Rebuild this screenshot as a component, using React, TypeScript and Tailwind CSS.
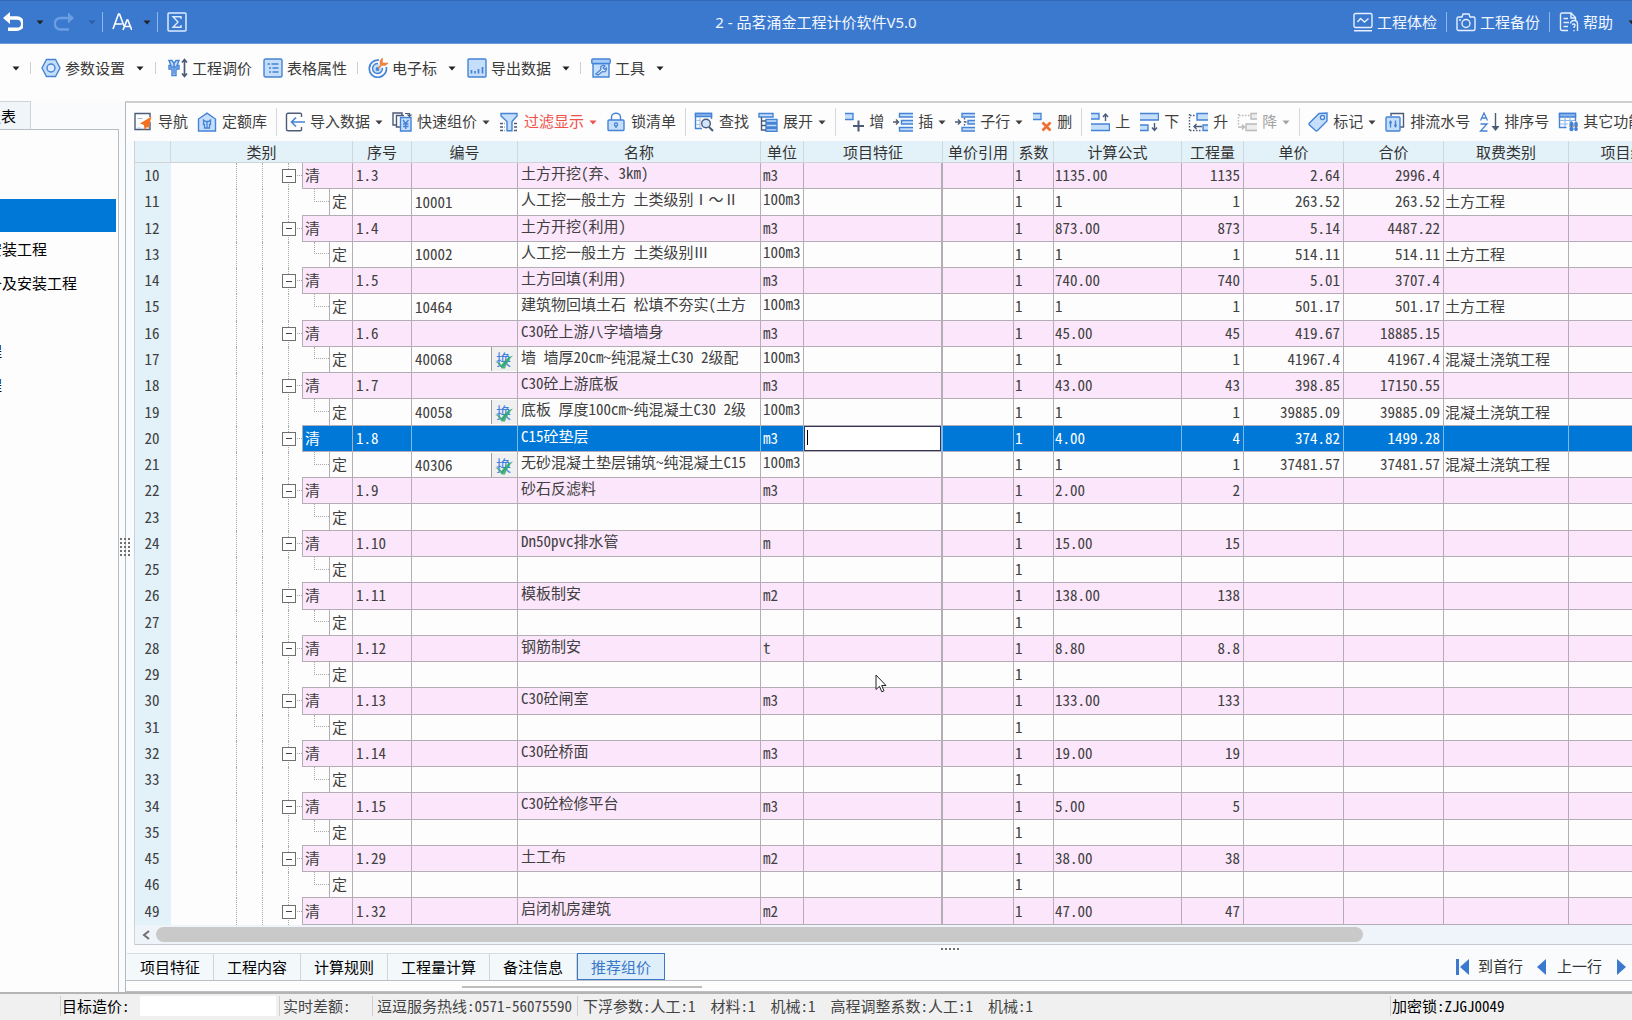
import type { ReactNode } from "react";

// --- DATA ---

type Row = {
    no: number;
    seq?: string;
    code?: string;
    name?: string;
    unit?: string;
    formula?: string;
    qty?: string;
    price?: string;
    total?: string;
    fee?: string;
};

const rows: Row[] = [
    { no: 10, seq: "1.3", name: "土方开挖(弃、3km)", unit: "m3", formula: "1135.00", qty: "1135", price: "2.64", total: "2996.4" },
    { no: 11, code: "10001", name: "人工挖一般土方 土类级别Ⅰ～Ⅱ", unit: "100m3", formula: "1", qty: "1", price: "263.52", total: "263.52", fee: "土方工程" },
    { no: 12, seq: "1.4", name: "土方开挖(利用)", unit: "m3", formula: "873.00", qty: "873", price: "5.14", total: "4487.22" },
    { no: 13, code: "10002", name: "人工挖一般土方 土类级别Ⅲ", unit: "100m3", formula: "1", qty: "1", price: "514.11", total: "514.11", fee: "土方工程" },
    { no: 14, seq: "1.5", name: "土方回填(利用)", unit: "m3", formula: "740.00", qty: "740", price: "5.01", total: "3707.4" },
    { no: 15, code: "10464", name: "建筑物回填土石 松填不夯实(土方", unit: "100m3", formula: "1", qty: "1", price: "501.17", total: "501.17", fee: "土方工程" },
    { no: 16, seq: "1.6", name: "C30砼上游八字墙墙身", unit: "m3", formula: "45.00", qty: "45", price: "419.67", total: "18885.15" },
    { no: 17, code: "40068", name: "墙 墙厚20cm~纯混凝土C30 2级配", unit: "100m3", formula: "1", qty: "1", price: "41967.4", total: "41967.4", fee: "混凝土浇筑工程" },
    { no: 18, seq: "1.7", name: "C30砼上游底板", unit: "m3", formula: "43.00", qty: "43", price: "398.85", total: "17150.55" },
    { no: 19, code: "40058", name: "底板 厚度100cm~纯混凝土C30 2级", unit: "100m3", formula: "1", qty: "1", price: "39885.09", total: "39885.09", fee: "混凝土浇筑工程" },
    { no: 20, seq: "1.8", name: "C15砼垫层", unit: "m3", formula: "4.00", qty: "4", price: "374.82", total: "1499.28" },
    { no: 21, code: "40306", name: "无砂混凝土垫层铺筑~纯混凝土C15", unit: "100m3", formula: "1", qty: "1", price: "37481.57", total: "37481.57", fee: "混凝土浇筑工程" },
    { no: 22, seq: "1.9", name: "砂石反滤料", unit: "m3", formula: "2.00", qty: "2" },
    { no: 23 },
    { no: 24, seq: "1.10", name: "Dn50pvc排水管", unit: "m", formula: "15.00", qty: "15" },
    { no: 25 },
    { no: 26, seq: "1.11", name: "模板制安", unit: "m2", formula: "138.00", qty: "138" },
    { no: 27 },
    { no: 28, seq: "1.12", name: "钢筋制安", unit: "t", formula: "8.80", qty: "8.8" },
    { no: 29 },
    { no: 30, seq: "1.13", name: "C30砼闸室", unit: "m3", formula: "133.00", qty: "133" },
    { no: 31 },
    { no: 32, seq: "1.14", name: "C30砼桥面", unit: "m3", formula: "19.00", qty: "19" },
    { no: 33 },
    { no: 34, seq: "1.15", name: "C30砼检修平台", unit: "m3", formula: "5.00", qty: "5" },
    { no: 35 },
    { no: 45, seq: "1.29", name: "土工布", unit: "m2", formula: "38.00", qty: "38" },
    { no: 46 },
    { no: 49, seq: "1.32", name: "启闭机房建筑", unit: "m2", formula: "47.00", qty: "47" },
];

const SELECTED = 20;

// --- ICONS ---

const B = "#4583d6";
const F = "#c5defa";
const D = "#4c5b78";

const Svg = ({ children, stroke = B, className = "" }: { children: ReactNode; stroke?: string; className?: string }) => (
    <svg viewBox="0 0 20 20" className={`h-5 w-5 shrink-0 ${className}`} fill="none" stroke={stroke} strokeWidth="1.4" aria-hidden="true">
        {children}
    </svg>
);

const UndoIcon = () => (
    <Svg stroke="#fff" className="mr-1">
        <path d="M4 6h10a5 5 0 0 1 0 11.300H5" strokeWidth="3.400" />
        <path d="M0 6l7-6v12z" fill="#fff" stroke="none" />
    </Svg>
);
const RedoIcon = () => (
    <Svg stroke="#6b9fe2">
        <path d="M15 6H6.500a5 5 0 0 0 0 11.500H15" strokeWidth="2.400" />
        <path d="M20 6l-6-5.500v11z" fill="#6b9fe2" stroke="none" />
    </Svg>
);
const FontIcon = () => (
    <Svg stroke="#fff">
        <path d="M1 17L6.500 2h1L12 14M3 12h7" strokeWidth="1.600" />
        <path d="M11 18l4-10h.8l4 10M12.500 14.500h6" strokeWidth="1.600" />
    </Svg>
);
const SigmaIcon = () => (
    <Svg stroke="#dcebff">
        <rect x="1" y="1" width="18" height="18" rx="1" strokeWidth="1.500" />
        <path d="M14 7V4.700H6l5 5.300-5 5.300h8V13" />
    </Svg>
);
const CheckupIcon = () => (
    <Svg stroke="#e6f0ff">
        <rect x="1" y="1.500" width="18" height="14" rx="1.500" />
        <path d="M4.500 10l3-3.500 4 3.500 4-3.500M1 18.800h18" />
    </Svg>
);
const BackupIcon = () => (
    <Svg stroke="#e6f0ff">
        <path d="M6 5l1-3h6l1 3h3.500a1.500 1.500 0 0 1 1.500 1.500V17a1.500 1.500 0 0 1-1.500 1.500h-15A1.500 1.500 0 0 1 1 17V6.500A1.500 1.500 0 0 1 2.500 5z" />
        <circle cx="10" cy="11.500" r="4" />
        <path d="M3 8h2" />
    </Svg>
);
const HelpIcon = () => (
    <Svg stroke="#e6f0ff">
        <path d="M9 18.500H3A1.500 1.500 0 0 1 1.500 17V2.500A1.500 1.500 0 0 1 3 1h9l4.500 4.500v3M12 1v5h4.500M4.500 6.500H9M4.500 10.500H10M4.500 14.500H9" />
        <path d="M11.500 11.500c0-4 7-4 7 .5V19M13 12.500c3-1.500 4 1 2 2.500v1M15 18v1.200" />
    </Svg>
);
const HexIcon = () => (
    <Svg>
        <path d="M5.500 1.500h9L19 10l-4.500 8.500h-9L1 10z" fill={F} />
        <circle cx="10" cy="10" r="4" fill="#dcebfd" />
    </Svg>
);
const AdjustIcon = () => (
    <Svg>
        <path d="M1 2.500h3l2 3 2-3h3L9 7.500h2v3.500H8v6.500H4V11H1V7.500h2z" fill={F} />
        <path d="M6 6v10M2 9h8" />
        <path d="M16.500 2v16M14 4.500l2.500-3 2.500 3M14 15.500l2.500 3 2.500-3" stroke={D} strokeWidth="1.700" />
    </Svg>
);
const PropsIcon = () => (
    <Svg>
        <rect x="1" y="1" width="18" height="18" rx="1.500" fill={F} />
        <path d="M4.500 6H7M8.500 6h7M6 10h2M9.500 10h6M6 14h2M9.500 14h6" strokeWidth="1.300" />
    </Svg>
);
const TargetIcon = () => (
    <Svg>
        <path d="M18.300 9A8.600 8.600 0 1 1 11 2.200" strokeWidth="1.700" />
        <path d="M14.500 10a5 5 0 1 1-4.500-4.500" fill={F} />
        <circle cx="9.500" cy="11" r="1.200" fill={B} />
        <path d="M10 10.500L15 5M14 1v4.500h5L17 7h-3.500l-1-1V3z" stroke="#ee8240" strokeWidth="1.500" />
    </Svg>
);
const ExportIcon = () => (
    <Svg>
        <rect x="1" y="1" width="18" height="18" rx="1" fill={F} />
        <path d="M4.500 15.500V12M8 15.500V13M11.500 15.500V11M15.500 15.500V9" strokeWidth="1.700" />
    </Svg>
);
const ToolIcon = () => (
    <Svg>
        <path d="M2 5.500h16V19H2z" fill={F} />
        <rect x="0.800" y="1" width="18.400" height="4.500" rx="1" fill="#a7cdf8" />
        <path d="M5 16l5-4.500c-1.500-3 2-5 4-3.500l-2 2 1.500 1.500 2-1.500c.5 3-2 4.500-4 3.500L7 17z" fill="#e6f1fe" strokeWidth="1.200" />
    </Svg>
);
const NavIcon = () => (
    <Svg stroke={D}>
        <path d="M17 10v7.500H2V1.500h15V5" />
        <path d="M18.500 4.500L7 11.500l4 1.500.5 5 2.500-3 1.500 1z" fill="#f37021" stroke="none" />
        <path d="M4.500 6.500h5M4.500 16h3" stroke="#a8bcd8" strokeWidth="1.200" />
    </Svg>
);
const QuotaIcon = () => (
    <Svg>
        <path d="M1.500 7L10 1.200 18.500 7v12h-17z" fill={F} />
        <path d="M6.500 8l2 1.500h3l2-1.500v4.500h-1V16h-5v-3.500h-1zM10 10v6" strokeWidth="1.300" />
    </Svg>
);
const ImportIcon = () => (
    <Svg stroke={D}>
        <path d="M16.500 5V2.500A1.300 1.300 0 0 0 15 1.200H3A1.500 1.500 0 0 0 1.500 2.700v14.600A1.500 1.500 0 0 0 3 18.800h12a1.300 1.300 0 0 0 1.500-1.300V15" />
        <path d="M20 10H7M11 5.500L6.500 10l4.500 4.500" stroke={B} strokeWidth="1.600" />
    </Svg>
);
const QuickIcon = () => (
    <Svg>
        <path d="M4.500 13H1V1h9v3M8 15H4.500V3.500H12" stroke={D} />
        <path d="M8.500 5.500H19V19H8.500z" fill={F} />
        <path d="M11 8l2.700 3.500L16.500 8M13.700 11.500V17M11 12h5.500M11 14.500h5.500" />
        <path d="M13 1.500h4.500V4M15.500 2.500l2 2 2-2" stroke={D} strokeWidth="1.200" />
    </Svg>
);
const FilterIcon = () => (
    <Svg>
        <path d="M2 1.500h16V4l-5 5.500v9.300H8V9.500L2 4z" fill={F} />
        <path d="M1 11.500h4.500M1 15h4.500M1 18.500h4.500M15 11.500h4M15 15h4M15 18.500h4" stroke={D} strokeDasharray="3 1" />
    </Svg>
);
const LockIcon = () => (
    <Svg>
        <path d="M5.500 8V5a4.500 3.800 0 0 1 9 0v3" />
        <rect x="2" y="8" width="16" height="10.500" rx="1" fill={F} />
        <circle cx="10" cy="12.500" r="1.500" fill="#fff" />
        <path d="M10 14v2" />
    </Svg>
);
const SearchIcon = () => (
    <Svg>
        <path d="M17.500 7V1.500h-16v15H8" stroke={B} />
        <path d="M1.500 1.500h16v3h-16z" fill="#8fb9ee" />
        <path d="M2 8.500h5M2 12.500h4M6 5v11" stroke="#a9c8ef" strokeWidth="1.200" />
        <circle cx="12" cy="11.500" r="4.300" fill="#d3e6fc" stroke={D} />
        <path d="M15 15l4 4" stroke={D} strokeWidth="2" />
    </Svg>
);
const ExpandIcon = () => (
    <Svg>
        <path d="M1 1.500h14V5H1zM8 7.500h11v3H8zM8 12h11v3H8zM8 16.500h11v2.800H8z" fill={F} />
        <path d="M3.500 5v13H8M3.500 9H8M3.500 13.500H8" stroke={D} />
    </Svg>
);
const AddIcon = () => (
    <Svg>
        <path d="M1 1.500h7.500V7H1z" fill={F} stroke="none" />
        <path d="M1 1.500h8v6H1" />
        <path d="M14.500 8.500v11M9 14h11" stroke={D} strokeWidth="2" />
    </Svg>
);
const InsertIcon = () => (
    <Svg>
        <path d="M20 1.500H6.500V5H20M20 8.500H8.500V12H20M20 15.500H6.500V19H20" fill={F} />
        <path d="M0 10h5M3 7.500L5.500 10 3 12.500" stroke={D} />
    </Svg>
);
const ChildIcon = () => (
    <Svg>
        <path d="M20 1.500H7V5H20M20 8.500H13V12H20M20 15.500H7V19H20" fill={F} />
        <path d="M0 10h5M3 7.500L5.500 10 3 12.500" stroke={D} />
        <path d="M9.500 6v8.500M10 10h3" stroke={D} strokeDasharray="1.500 1.500" />
    </Svg>
);
const RemoveIcon = () => (
    <Svg>
        <path d="M1 1.500h7.500V7H1z" fill={F} stroke="none" />
        <path d="M1 1.500h8v6H1" />
        <path d="M10.500 10.500l8 8M18.500 10.500l-8 8" stroke="#ee7030" strokeWidth="2.600" />
    </Svg>
);
const UpIcon = () => (
    <Svg>
        <path d="M1 1.500h8V7H1M1 12h18.500v6.500H1" fill={F} />
        <path d="M15.500 9V2.500M13 5l2.500-3L18 5" stroke={D} />
    </Svg>
);
const DownIcon = () => (
    <Svg>
        <path d="M1 1.500h18.500V8H1M1 13h8v5.500H1" fill={F} />
        <path d="M15.500 11v7M13 15.500l2.500 3 2.500-3" stroke={D} />
    </Svg>
);
const PromoteIcon = () => (
    <Svg>
        <path d="M20 1.500H9V8h11M20 13h-5v5.500h5" fill={F} />
        <path d="M1.500 2v17M2 3.500h6M2 18.500h12" stroke={D} strokeDasharray="1.500 1.500" />
        <path d="M14 14.500H6M8.500 12L6 14.500 8.500 17" stroke={D} />
    </Svg>
);
const DemoteIcon = () => (
    <Svg stroke="#b9b9b9">
        <path d="M20 1.500h-6V7h6M20 12H9v6.500h11" fill="#eee" />
        <path d="M1.500 2v12M2 3.500h12" strokeDasharray="1.500 1.500" />
        <path d="M1 15h6.500M5 12.500L7.500 15 5 17.500" />
    </Svg>
);
const TagIcon = () => (
    <Svg>
        <path d="M11 1.500L19 1v8l-9.500 9.500a1.500 1.500 0 0 1-2 0l-6-5.500a1.500 1.500 0 0 1 0-2z" fill={F} />
        <circle cx="14.500" cy="5.500" r="2" fill="#fff" />
    </Svg>
);
const SerialIcon = () => (
    <Svg>
        <path d="M6 4V1.500h12.500V15H15" stroke={D} />
        <rect x="1" y="5" width="14" height="14" rx="1" fill={F} />
        <path d="M5.500 8.500v7M10.500 8.500v7M4 10.500h3M9 13.500h3" />
    </Svg>
);
const SortIcon = () => (
    <Svg>
        <path d="M1.500 8.500L5 1l3.500 7.500M2.800 6h4.500M1.500 12h6.500l-6.500 7h7" strokeWidth="1.300" />
        <path d="M16.500 1v16" stroke={D} />
        <path d="M12.500 14h8l-4 5z" fill={D} stroke="none" />
    </Svg>
);
const MoreIcon = () => (
    <Svg>
        <path d="M8.500 15.500H1.500V1.500h16V9" />
        <path d="M1.500 1.500h16V5h-16z" fill="#8fb9ee" />
        <path d="M2 8.500h15M2 12h8M7 5v10M12 5v5" stroke="#90b8ea" strokeWidth="1.200" />
        <path d="M13.500 9.500v9M18 9.500v9M11 14h9" stroke={D} strokeWidth="1.200" />
        <circle cx="13.500" cy="12" r="1.500" fill={B} />
        <circle cx="18" cy="12" r="1.200" fill={B} />
        <circle cx="13.500" cy="17" r="1.500" fill={B} />
        <circle cx="18" cy="17" r="1.200" fill={B} />
    </Svg>
);

const Caret = ({ className = "text-[#222]" }: { className?: string }) => (
    <svg viewBox="0 0 8 5" className={`h-[5px] w-2 shrink-0 ${className}`} aria-hidden="true">
        <path d="M0.500 0.500h7L4 4.500z" fill="currentColor" />
    </svg>
);

// --- TOOLBARS ---

const Sep = ({ className = "" }: { className?: string }) => <span className={`w-px shrink-0 ${className}`}></span>;

const MenuItem = ({ icon, label, caret = false }: { icon: ReactNode; label: string; caret?: boolean }) => (
    <button className="flex shrink-0 items-center gap-[11px] whitespace-nowrap">
        <span className="flex items-center gap-1">
            {icon}
            {label}
        </span>
        {caret && <Caret />}
    </button>
);

const ToolItem = ({ icon, label, caret = false, className = "" }: { icon: ReactNode; label: string; caret?: boolean; className?: string }) => (
    <button className={`flex shrink-0 items-center gap-[5px] whitespace-nowrap ${className}`}>
        {icon}
        <span className="pb-0.5">{label}</span>
        {caret && <Caret className="text-current" />}
    </button>
);

const ToolSep = () => <Sep className="-mr-px h-7 bg-[#d4d8dc]" />;

const TitleBar = () => (
    <header className="grid h-11 shrink-0 grid-cols-[1fr_auto_1fr] items-center border-t border-b border-t-[#2f68b8] border-b-[#6e9ddd] bg-[#3b79cf] text-[#f2f7ff]">
        <div className="flex items-center pl-[3px]">
            <button aria-label="撤销"><UndoIcon /></button>
            <button aria-label="撤销列表" className="ml-[9px]"><Caret /></button>
            <button aria-label="重做" className="ml-[10px]"><RedoIcon /></button>
            <button aria-label="重做列表" className="ml-[14px]"><Caret className="text-[#2c5fa8]" /></button>
            <Sep className="ml-[6px] h-5 bg-[#8fb4e6]" />
            <button aria-label="字体" className="ml-[9px]"><FontIcon /></button>
            <button aria-label="字体列表" className="ml-[11px]"><Caret /></button>
            <Sep className="ml-[6px] h-5 bg-[#8fb4e6]" />
            <button aria-label="汇总" className="ml-[9px]"><SigmaIcon /></button>
        </div>
        <h1 className="font-['Noto_Sans','Noto_Sans_CJK_SC',sans-serif]">2 - 品茗涌金工程计价软件V5.0</h1>
        <div className="flex items-center justify-end gap-[9px] overflow-hidden">
            <button className="flex items-center gap-1"><CheckupIcon />工程体检</button>
            <Sep className="h-5 bg-[#8fb4e6]" />
            <button className="flex items-center gap-1"><BackupIcon />工程备份</button>
            <Sep className="h-5 bg-[#8fb4e6]" />
            <button className="flex items-center gap-1"><HelpIcon />帮助</button>
            <button aria-label="帮助列表" className="-mr-1 ml-[6px]"><Caret /></button>
        </div>
    </header>
);

const MenuBar = () => (
    <nav className="flex h-[57px] shrink-0 items-start overflow-hidden bg-[#fdfdfd] pt-3 pl-3 text-[#3a3a3a]">
        <div className="flex items-center gap-[11px] leading-6">
            <button aria-label="更多"><Caret /></button>
            <Sep className="-mx-px h-3 bg-[#cfcfcf]" />
            <MenuItem icon={<HexIcon />} label="参数设置" caret />
            <Sep className="mr-px h-3 bg-[#cfcfcf]" />
            <MenuItem icon={<AdjustIcon />} label="工程调价" />
            <MenuItem icon={<PropsIcon />} label="表格属性" />
            <Sep className="-mx-px h-3 bg-[#cfcfcf]" />
            <MenuItem icon={<TargetIcon />} label="电子标" caret />
            <MenuItem icon={<ExportIcon />} label="导出数据" caret />
            <Sep className="-mx-px h-3 bg-[#cfcfcf]" />
            <MenuItem icon={<ToolIcon />} label="工具" caret />
        </div>
    </nav>
);

const GridToolbar = () => (
    <div className="flex h-[38px] shrink-0 items-center gap-[9px] overflow-hidden bg-[#fdfdfd] pl-[7px] text-[#3f3f3f]">
        <ToolItem icon={<NavIcon />} label="导航" />
        <ToolItem icon={<QuotaIcon />} label="定额库" />
        <ToolSep />
        <ToolItem icon={<ImportIcon />} label="导入数据" caret />
        <ToolItem icon={<QuickIcon />} label="快速组价" caret />
        <ToolItem icon={<FilterIcon />} label="过滤显示" caret className="text-[#f0504c]" />
        <ToolItem icon={<LockIcon />} label="锁清单" />
        <ToolSep />
        <ToolItem icon={<SearchIcon />} label="查找" />
        <ToolItem icon={<ExpandIcon />} label="展开" caret />
        <ToolSep />
        <ToolItem icon={<AddIcon />} label="增" />
        <ToolItem icon={<InsertIcon />} label="插" caret />
        <ToolItem icon={<ChildIcon />} label="子行" caret />
        <ToolItem icon={<RemoveIcon />} label="删" />
        <ToolSep />
        <ToolItem icon={<UpIcon />} label="上" />
        <ToolItem icon={<DownIcon />} label="下" />
        <ToolItem icon={<PromoteIcon />} label="升" />
        <ToolItem icon={<DemoteIcon />} label="降" caret className="text-[#a3a3a3]" />
        <ToolSep />
        <ToolItem icon={<TagIcon />} label="标记" caret />
        <ToolItem icon={<SerialIcon />} label="排流水号" />
        <ToolItem icon={<SortIcon />} label="排序号" />
        <ToolItem icon={<MoreIcon />} label="其它功能" caret />
    </div>
);

// --- LEFT PANEL ---

const SideItem = ({ label, className }: { label: string; className: string }) => (
    <li className="h-[34px]">
        <button className={`flex h-full items-center justify-end overflow-hidden whitespace-nowrap ${className}`}>{label}</button>
    </li>
);

const SidePanel = () => (
    <aside className="flex w-[119px] shrink-0 flex-col">
        <button className="flex h-7 w-[31px] items-center justify-end overflow-hidden border-t border-r border-[#cdd3d8] bg-[#eff5f9] pr-[14px] whitespace-nowrap text-black">报表</button>
        <ul className="flex-1 border-t border-r border-[#b9bec3] bg-[#fdfdfd] pt-[69px] pr-0.5 text-black">
            <li className="h-[33px] bg-[#0078d7]"></li>
            <SideItem label="安装工程" className="w-[47px]" />
            <SideItem label="设备及安装工程" className="w-[77px]" />
            <li className="h-[34px]"></li>
            <SideItem label="工程" className="w-[2px]" />
            <SideItem label="工程" className="w-[2px]" />
        </ul>
    </aside>
);

// --- GRID ---

const TreeCell = ({ row, active }: { row: Row; active: boolean }) => {
    const guide = "h-full shrink-0 border-r border-dotted border-[#a9a9a9]";
    return (
        <div className="flex h-full min-h-[26px] items-stretch">
            <span className={`${guide} w-[66px]`}></span>
            <span className={`${guide} w-[26px]`}></span>
            <span className="relative flex w-[39px] shrink-0">
                <span className={`${guide} w-[26px]`}></span>
                {row.seq && (
                    <>
                        <span className="h-1/2 w-[13px] border-b border-dotted border-[#a9a9a9]"></span>
                        <button aria-label="折叠" className="absolute top-1/2 left-[19px] flex h-[14px] w-[14px] -translate-y-1/2 items-center justify-center border border-[#6f6f6f] bg-white">
                            <span className="h-px w-[6px] bg-[#444]"></span>
                        </button>
                    </>
                )}
            </span>
            {row.seq ? (
                <span className={`flex flex-1 items-center border-b border-l border-[#b5adb5] pb-px pl-0.5 ${active ? "bg-[#0078d7]" : "bg-[#fbe6fb]"}`}>清</span>
            ) : (
                <>
                    <span className="w-[27px] shrink-0 border-b border-[#b5adb5] pl-3">
                        <span className="block h-1/2 border-b border-l border-dotted border-[#a9a9a9]"></span>
                    </span>
                    <span className="flex flex-1 items-center border-b border-l border-[#b5adb5] pb-px pl-0.5">定</span>
                </>
            )}
        </div>
    );
};

const SwapBadge = () => (
    <span className="relative flex h-6 w-[26px] items-center justify-center border-l border-[#9d9d9d] bg-[#f0f0f0] pr-0.5 text-[#3f7fe0]">
        换
        <svg viewBox="0 0 20 20" className="absolute h-5 w-5" fill="none" aria-hidden="true">
            <path d="M1 12.500c3 0 5 1.500 6.500 3.500C10 11.500 14 8 19 6.500 15.500 10 12.500 14.500 11 19.500H7.500C6 16.500 4 14 1 12.500z" fill="#2fa869" fillOpacity="0.850" />
        </svg>
    </span>
);

const GridRow = ({ row }: { row: Row }) => {
    const active = row.no === SELECTED;
    const tone = active ? "bg-[#0078d7] text-white border-r-[#7fb9e8]" : row.seq ? "bg-[#fbe6fb] border-r-[#b5adb5]" : "bg-[#fdfdfd] border-r-[#b5adb5]";
    const cell = `border-r border-b border-b-[#b5adb5] overflow-hidden whitespace-nowrap ${tone}`;
    return (
        <tr className={active ? "text-white" : "text-[#404040]"}>
            <th scope="row" className="h-[26px] bg-[#e3f1f9] pr-0.5 pb-0.5 font-normal text-[#404040]">{row.no}</th>
            <td className="h-[26px] border-r border-[#b5adb5] bg-[#fdfdfd]"><TreeCell row={row} active={active} /></td>
            <td className={`${cell} pb-px pl-[3px]`}>{row.seq}</td>
            <td className={`${cell} pl-[3px]`}>
                <span className="flex items-center justify-between">
                    {row.code}
                    {row.code?.startsWith("4") && <SwapBadge />}
                </span>
            </td>
            <td className={`${cell} pl-[3px] align-top leading-5`}>{row.name}</td>
            <td className={`${cell} pl-0.5 ${row.seq ? "pb-px" : "align-top leading-5"}`}>{row.unit}</td>
            <td className={`relative border-r-2 border-b border-b-[#b5adb5] ${tone}`}>
                {active && (
                    <>
                        <input aria-label="项目特征" className="absolute inset-0 w-full border border-[#335] bg-white px-1 text-black caret-transparent outline-none" />
                        <span className="absolute top-1 left-[3px] h-[15px] w-px bg-black"></span>
                    </>
                )}
            </td>
            <td className={cell}></td>
            <td className={`${cell} pb-px pl-px`}>1</td>
            <td className={`${cell} pb-px pl-px`}>{row.formula}</td>
            <td className={`${cell} pr-[3px] pb-px text-right`}>{row.qty}</td>
            <td className={`${cell} pr-[3px] pb-px text-right`}>{row.price}</td>
            <td className={`${cell} pr-[3px] pb-px text-right`}>{row.total}</td>
            <td className={`${cell} pb-px pl-px`}>{row.fee}</td>
            <td className={cell}></td>
        </tr>
    );
};

const headers = ["", "类别", "序号", "编号", "名称", "单位", "项目特征", "单价引用", "系数", "计算公式", "工程量", "单价", "合价", "取费类别", "项目编码"];

const Grid = () => (
    <div className="min-h-0 flex-1 overflow-hidden">
        <table className="h-full w-[1558px] table-fixed border-separate border-spacing-0 font-['Noto_Sans_Mono_CJK_SC','Noto_Sans_CJK_SC',sans-serif]">
            <colgroup>
                <col className="w-[36px]" />
                <col className="w-[182px]" />
                <col className="w-[59px]" />
                <col className="w-[106px]" />
                <col className="w-[243px]" />
                <col className="w-[43px]" />
                <col className="w-[139px]" />
                <col className="w-[71px]" />
                <col className="w-[40px]" />
                <col className="w-[128px]" />
                <col className="w-[62px]" />
                <col className="w-[100px]" />
                <col className="w-[100px]" />
                <col className="w-[125px]" />
                <col className="w-[124px]" />
            </colgroup>
            <thead>
                <tr>
                    {headers.map((h, i) => (
                        <th key={i} scope="col" className="h-[22px] border-r border-b border-r-[#cfd9dd] border-b-[#cfd3d8] bg-[#e3f1f9] font-normal whitespace-nowrap text-[#333]">{h}</th>
                    ))}
                </tr>
            </thead>
            <tbody>
                {rows.map((row) => (
                    <GridRow key={row.no} row={row} />
                ))}
            </tbody>
        </table>
    </div>
);

const HScroll = () => (
    <div className="flex h-5 shrink-0 items-center border-b border-[#c4cad0] bg-[#eff4fa]">
        <button aria-label="向左滚动" className="flex w-[21px] justify-center">
            <svg viewBox="0 0 8 10" className="h-[10px] w-2" fill="none" stroke="#707070" strokeWidth="2" aria-hidden="true">
                <path d="M7 1L2 5l5 4" />
            </svg>
        </button>
        <span className="mr-[269px] h-[15px] flex-1 rounded-full bg-[#c9c9c9]"></span>
    </div>
);

// --- BOTTOM ---

const tabs = ["项目特征", "工程内容", "计算规则", "工程量计算", "备注信息"];

const BottomTabs = () => (
    <div className="flex h-7 shrink-0 items-stretch border-b border-[#bcbfc3] pl-px text-black">
        {tabs.map((t) => (
            <button key={t} className="border-t border-r border-t-[#d8dde0] border-r-[#d0d5d9] bg-[#f3f8fb] px-[13px]">{t}</button>
        ))}
        <button className="border border-[#3c78c8] bg-[#dfeffa] px-[13px] text-[#3c78c8]">推荐组价</button>
        <div className="ml-auto flex shrink-0 items-center gap-[14px] overflow-hidden text-[#333]">
            <button className="flex items-center gap-2">
                <svg viewBox="0 0 14 16" className="h-4 w-[14px]" fill="#3b79cf" aria-hidden="true"><path d="M0 0h3v16H0zM13 0v16L4 8z" /></svg>
                <span className="pb-0.5">到首行</span>
            </button>
            <button className="flex items-center gap-[10px]">
                <svg viewBox="0 0 10 16" className="h-4 w-[10px]" fill="#3b79cf" aria-hidden="true"><path d="M9 0v16L0 8z" /></svg>
                <span className="pb-0.5">上一行</span>
            </button>
            <button aria-label="下一行" className="pr-[6px]">
                <svg viewBox="0 0 10 16" className="h-4 w-[10px]" fill="#3b79cf" aria-hidden="true"><path d="M1 0v16l9-8z" /></svg>
            </button>
        </div>
    </div>
);

const StatusBar = () => (
    <footer className="flex h-7 shrink-0 items-center border-t-2 border-[#b4b4b4] bg-[#f0f0f0] pb-0.5 pl-[60px] font-['Noto_Sans_Mono_CJK_SC','Noto_Sans_CJK_SC',sans-serif] whitespace-nowrap text-[#444]">
        <Sep className="h-5 bg-[#cfcfcf]" />
        <label htmlFor="target" className="w-[79px] pl-px text-black">目标造价:</label>
        <input id="target" className="h-5 w-[136px] bg-white" />
        <Sep className="mx-[3px] h-5 bg-[#cfcfcf]" />
        <span className="w-[89px]">实时差额:</span>
        <Sep className="mr-1 h-5 bg-[#cfcfcf]" />
        <span>逗逗服务热线:0571-56075590</span>
        <Sep className="mx-[5px] h-5 bg-[#cfcfcf]" />
        <span className="flex gap-[15px]">
            <span>下浮参数:人工:1</span>
            <span>材料:1</span>
            <span>机械:1</span>
            <span>高程调整系数:人工:1</span>
            <span>机械:1</span>
        </span>
        <span className="ml-auto flex w-[242px] items-center text-black">
            <Sep className="mr-px h-5 bg-[#cfcfcf]" />
            加密锁:ZJGJ0049
        </span>
    </footer>
);

export default function App() {
    return (
        <div className="relative flex h-screen flex-col overflow-hidden bg-[#f9fbfd] font-['Noto_Sans_CJK_SC',sans-serif] text-[15px] leading-5">
            <TitleBar />
            <MenuBar />
            <div className="flex min-h-0 flex-1">
                <SidePanel />
                <div className="grid w-[6px] shrink-0 content-center justify-start">
                    <span className="relative z-10 h-5 w-3 bg-[radial-gradient(circle,#707070_1px,transparent_1px)] bg-[size:4px_4px]"></span>
                </div>
                <main className="flex min-w-0 flex-1 flex-col border-t-2 border-l border-t-[#cdcfd0] border-l-[#b4b8bc]">
                    <GridToolbar />
                    <div className="ml-2 flex min-h-0 flex-1 flex-col border-l border-[#cdd3d6]">
                        <Grid />
                        <HScroll />
                    </div>
                    <div className="flex h-2 shrink-0 items-center justify-center pl-[141px]">
                        <span className="h-1 w-5 bg-[radial-gradient(circle,#707070_1px,transparent_1px)] bg-[size:4px_4px]"></span>
                    </div>
                    <BottomTabs />
                    <div className="h-[11px] shrink-0 border-b border-[#bcbfc3] bg-[#fdfdfd] pt-[5px]">
                        <div className="ml-[336px] h-0.5 w-[240px] bg-[#bdbdbd]"></div>
                    </div>
                </main>
            </div>
            <StatusBar />

            {/* Pointer */}
            <svg viewBox="0 0 12 19" className="pointer-events-none absolute top-[674px] left-[875px] h-[19px] w-3" fill="#fff" stroke="#222" aria-hidden="true">
                <path d="M1 1v14.500l3.500-3.200 2.300 5.500 2.200-1-2.300-5.300H11z" />
            </svg>
        </div>
    );
}
